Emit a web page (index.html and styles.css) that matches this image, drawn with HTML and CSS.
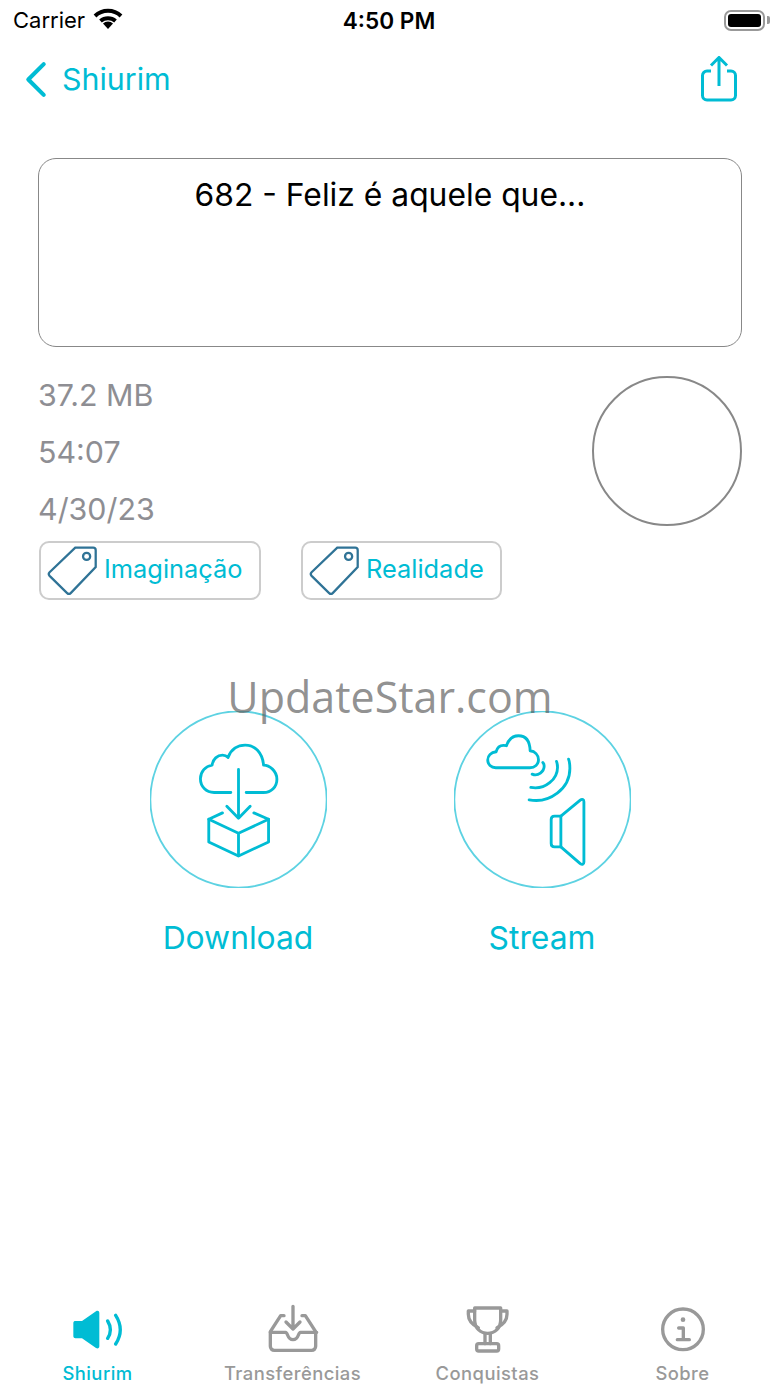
FILE: index.html
```html
<!DOCTYPE html>
<html lang="pt">
  <head>
    <meta charset="UTF-8" />
    <meta name="viewport" content="width=device-width, initial-scale=1.0" />
    <title>Shiurim</title>
    <link rel="stylesheet" href="styles.css">
  </head>
  <body>
    <div class="page">
      <header class="status-bar">
        <div class="status-left">
          <span>Carrier</span>
          <svg class="wifi" viewBox="0 0 30 22"><path d="M2 9a19 19 0 0 1 26 0" /><path d="M7.5 14a11.5 11.5 0 0 1 15 0" /><path class="wifi-dot" d="M15 22l-5-5.5a7 7 0 0 1 10 0z" /></svg>
        </div>
        <div class="status-time">4:50 PM</div>
        <div class="status-right">
          <div class="battery"><div class="battery-fill"></div></div>
          <div class="battery-cap"></div>
        </div>
      </header>

      <nav class="nav-bar">
        <a class="back">
          <svg class="back-icon" viewBox="0 0 22 36"><path d="M19 3L4 18l15 15" /></svg>
          <span>Shiurim</span>
        </a>
        <svg class="share-icon" viewBox="0 0 36 46"><path d="M10 15H6a4.5 4.5 0 0 0-4.5 4.5v20A4.5 4.5 0 0 0 6 44h24a4.5 4.5 0 0 0 4.5-4.5v-20A4.5 4.5 0 0 0 30 15h-4" /><path d="M18 30V1.5M10 9.5l8-8 8 8" /></svg>
      </nav>

      <main class="content">
        <section class="title-card">682 - Feliz é aquele que...</section>

        <section class="meta">
          <div class="meta-lines">
            <div>37.2 MB</div>
            <div>54:07</div>
            <div>4/30/23</div>
          </div>
          <div class="progress-circle"></div>
        </section>

        <section class="tags">
          <a class="tag tag-wide">
            <svg class="tag-icon" viewBox="78 43 154 154"><path d="M165 48h55a8 8 0 0 1 8 8v52l-77 80a8 8 0 0 1-11 0l-54-53a8 8 0 0 1 0-11z" /><circle cx="200" cy="75" r="11" /></svg>
            <span>Imaginação</span>
          </a>
          <a class="tag tag-narrow">
            <svg class="tag-icon" viewBox="78 43 154 154"><path d="M165 48h55a8 8 0 0 1 8 8v52l-77 80a8 8 0 0 1-11 0l-54-53a8 8 0 0 1 0-11z" /><circle cx="200" cy="75" r="11" /></svg>
            <span>Realidade</span>
          </a>
        </section>

        <section class="actions">
          <a class="action">
            <svg class="action-icon" viewBox="29 29 530 530">
              <circle class="action-ring" cx="294" cy="294" r="264" />
              <path d="M271 273h-50c-24 0-41-18-41-41 0-21 15-38 35-41 2-18 16-30 31-30 7 0 12 2 17 7 8-24 28-37 51-37 30 0 52 24 55 60 18 0 40 18 40 42 0 23-17 40-40 40h-52" />
              <path d="M294 204v146M259 314l35 36 35-36" />
              <path d="M246 334l-41 19v68l89 42 90-42v-68l-44-19" />
              <path d="M205 353l89 42 90-42M294 395v68" />
            </svg>
            <span>Download</span>
          </a>
          <a class="action">
            <svg class="action-icon" viewBox="25 30 530 530">
              <circle class="action-ring" cx="290" cy="295" r="264" />
              <path d="M150 200c-14 0-24-10-24-23 0-13 10-23 25-25 4-14 14-22 31-18 7-20 19-30 36-30 20 0 34 14 35 45 14 2 25 12 25 27 0 14-11 24-26 24z" />
              <path d="M259 219c18 8 36-8 36-24 0-4-1-8-4-11" />
              <path d="M255 259c44 8 80-26 80-60 0-7-1-13-3-18" />
              <path d="M250 296c62 12 122-34 122-94 0-10-1-20-4-28" />
              <path d="M326 345h19v92h-19c-6 0-10-4-10-10v-72c0-6 4-10 10-10z" />
              <path d="M345 345l58-48c6-5 11-2 11 5v180c0 7-5 9-11 5l-58-50" />
            </svg>
            <span>Stream</span>
          </a>
        </section>
      </main>

      <footer class="tab-bar">
        <a class="tab active">
          <svg class="tab-icon" viewBox="91 24 162 162">
            <path class="solid" d="M98 84c0-4 3-6 6-6h20l42-29c5-3 10-1 10 5v100c0 6-5 8-10 5l-42-29h-20c-3 0-6-2-6-6z" />
            <path d="M201 78c10 16 10 36 0 52M225 61c18 28 18 58 0 86" />
          </svg>
          <span>Shiurim</span>
        </a>
        <a class="tab">
          <svg class="tab-icon" viewBox="676 24 162 162">
            <path d="M730 62h-10l-31 48v44c0 7 5 12 12 12h112c7 0 12-5 12-12v-44l-31-48h-10" />
            <path d="M689 112h46c7 0 4 22 22 22s15-22 22-22h49" />
            <path d="M757 34v68M736 81l21 21 21-21" />
          </svg>
          <span>Transferências</span>
        </a>
        <a class="tab">
          <svg class="tab-icon" viewBox="151 24 162 162">
            <path d="M192 39h78v36c0 24-17 40-39 40s-39-16-39-40z" />
            <path d="M192 48h-19v10c0 20 13 32 30 40M270 48h19v10c0 20-13 32-30 40" />
            <path d="M223 115v31M239 115v31" />
            <path d="M204 146h54a6 6 0 0 1 6 6v10a6 6 0 0 1-6 6h-54a6 6 0 0 1-6-6v-10a6 6 0 0 1 6-6z" />
          </svg>
          <span>Conquistas</span>
        </a>
        <a class="tab">
          <svg class="tab-icon" viewBox="736 24 162 162">
            <circle cx="817" cy="103" r="61" />
            <path d="M804 99h14v34M800 134h36" />
            <circle class="solid" cx="817" cy="74" r="7" />
          </svg>
          <span>Sobre</span>
        </a>
      </footer>

      <div class="watermark">UpdateStar.com</div>
    </div>
  </body>
</html>
```

FILE: styles.css
```css
* {
  box-sizing: border-box;
}
body {
  margin: 0;
  background: #fff;
  font-family: Inter, "Liberation Sans", sans-serif;
}
.page {
  position: relative;
  display: flex;
  flex-direction: column;
  width: 780px;
  height: 1387px;
  overflow: hidden;
}

/* status bar */
.status-bar {
  display: grid;
  grid-template-columns: 1fr auto 1fr;
  align-items: center;
  height: 40px;
  padding: 0 13px;
  font-size: 22px;
  color: #000;
}
.status-left {
  display: flex;
  align-items: center;
  gap: 8px;
}
.wifi {
  width: 30px;
  height: 22px;
  margin-top: -4px;
  fill: none;
  stroke: #000;
  stroke-width: 4;
}
.wifi-dot {
  fill: #000;
  stroke: none;
}
.status-time {
  margin-left: -2px;
  font-size: 22.6px;
  font-weight: 600;
}
.status-right {
  display: flex;
  justify-content: flex-end;
  align-items: center;
  margin-right: -3px;
}
.battery {
  width: 41px;
  height: 21px;
  padding: 2px;
  border: 2px solid #999;
  border-radius: 7px;
}
.battery-fill {
  height: 100%;
  background: #000;
  border-radius: 3px;
}
.battery-cap {
  width: 3px;
  height: 8px;
  margin-left: 2px;
  background: #999;
  border-radius: 0 2px 2px 0;
}

/* nav */
.nav-bar {
  display: flex;
  justify-content: space-between;
  align-items: center;
  height: 78px;
  margin-bottom: 2px;
  padding: 0 43px 0 24px;
  color: #00bcd4;
}
.back {
  display: flex;
  align-items: center;
  gap: 15px;
  font-size: 30.4px;
}
.back-icon {
  width: 23px;
  height: 37px;
  fill: none;
  stroke: #00bcd4;
  stroke-width: 4;
  stroke-linecap: round;
  stroke-linejoin: round;
}
.share-icon {
  width: 36px;
  height: 46px;
  fill: none;
  stroke: #00bcd4;
  stroke-width: 3;
}

/* content */
.content {
  flex: 1;
  padding: 38px 38px 0;
}
.title-card {
  height: 189px;
  padding-top: 14px;
  border: 1px solid #888;
  border-radius: 18px;
  font-size: 31.8px;
  line-height: 44px;
  text-align: center;
  color: #000;
}
.meta {
  display: flex;
  justify-content: space-between;
  align-items: flex-start;
  margin-top: 20px;
}
.meta-lines {
  font-size: 30.4px;
  line-height: 57px;
  color: #8e8e93;
}
.progress-circle {
  width: 150px;
  height: 150px;
  margin-top: 8.5px;
  border: 2px solid #888;
  border-radius: 50%;
}
.tags {
  display: flex;
  gap: 40px;
  margin-top: 3px;
  padding-left: 1px;
}
.tag {
  display: flex;
  align-items: center;
  gap: 7px;
  height: 59px;
  padding-left: 6px;
  border: 2px solid #ccc;
  border-radius: 10px;
  font-size: 25.4px;
  color: #00bcd4;
}
.tag span {
  margin-bottom: 4px;
}
.tag-wide {
  width: 222px;
}
.tag-narrow {
  width: 201px;
}
.tag-icon {
  width: 50px;
  height: 50px;
  fill: none;
  stroke: #2f7396;
  stroke-width: 7;
}
.actions {
  display: flex;
  gap: 127px;
  margin-top: 111px;
  padding-left: 111.5px;
}
.action {
  display: flex;
  flex-direction: column;
  align-items: center;
  width: 177px;
  font-size: 31.8px;
  line-height: 50px;
  color: #00bcd4;
}
.action span {
  margin-top: 25px;
}
.action-icon {
  width: 177px;
  height: 177px;
  fill: none;
  stroke: #00bcd4;
  stroke-width: 8.5;
  stroke-linecap: round;
  stroke-linejoin: round;
}
.action-ring {
  stroke: #5dd2e2;
  stroke-width: 5.5;
}

/* tabs */
.tab-bar {
  display: grid;
  grid-template-columns: repeat(4, 1fr);
  height: 84px;
}
.tab {
  display: flex;
  flex-direction: column;
  align-items: center;
  font-size: 18.4px;
  font-weight: 500;
  letter-spacing: 0.45px;
  line-height: 22px;
  color: #999;
}
.tab span {
  margin-top: 5px;
}
.tab-icon {
  width: 54px;
  height: 54px;
  fill: none;
  stroke: #999;
  stroke-width: 10;
  stroke-linecap: round;
  stroke-linejoin: round;
}
.tab.active {
  color: #00bcd4;
}
.tab.active .tab-icon {
  stroke: #00bcd4;
}
.solid {
  fill: #999;
  stroke: none;
}
.tab.active .solid {
  fill: #00bcd4;
}

/* overlay */
.watermark {
  position: absolute;
  top: 665px;
  left: 0;
  width: 100%;
  font-family: "Open Sans", sans-serif;
  font-size: 43px;
  line-height: 63px;
  text-align: center;
  color: rgba(90, 90, 90, 0.68);
}
```
